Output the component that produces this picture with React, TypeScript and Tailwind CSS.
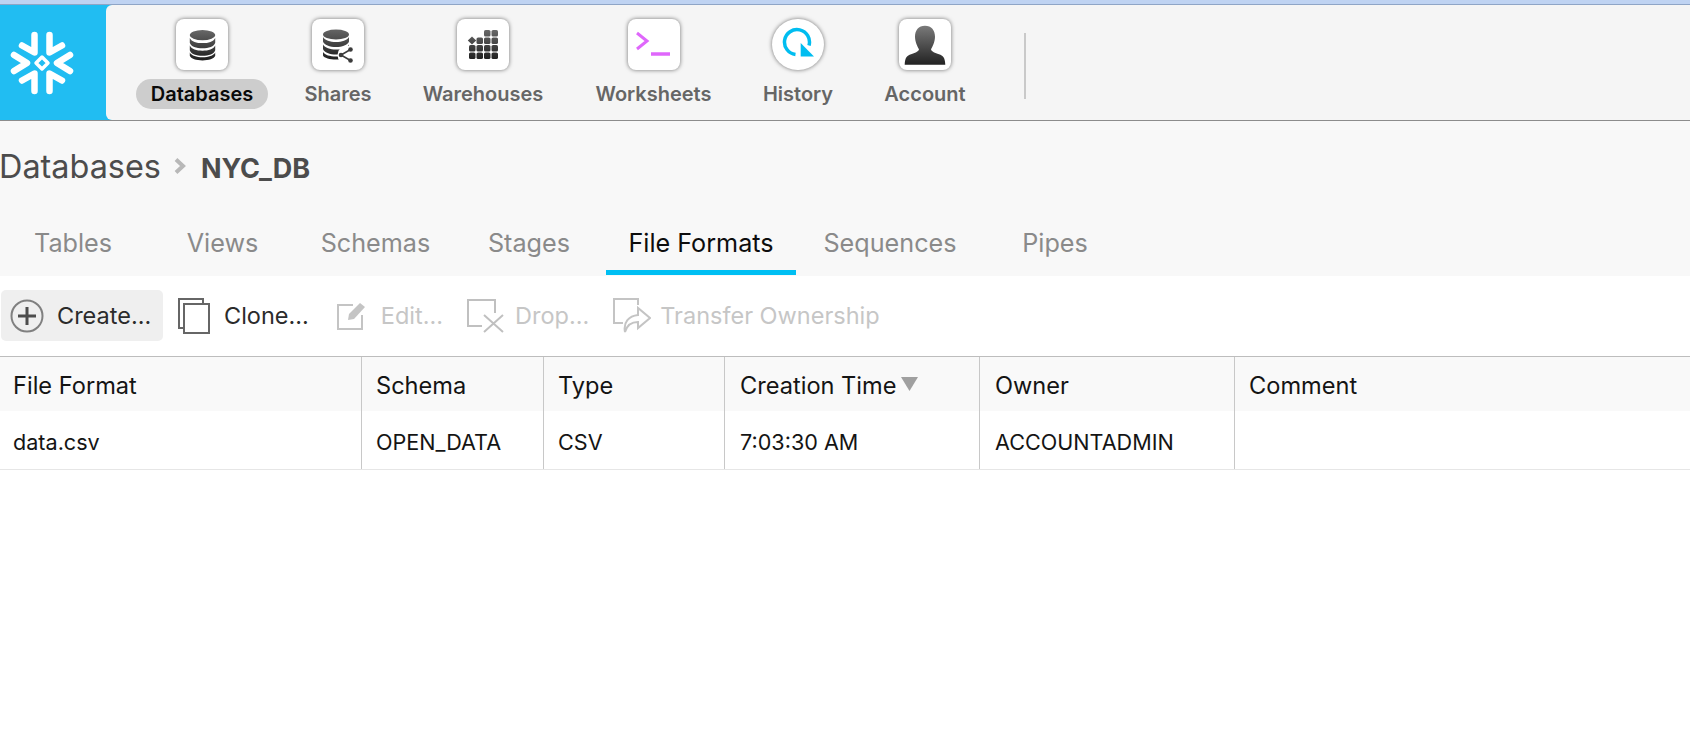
import React from "react";

const Tile = ({ round, children }: { round?: boolean; children: React.ReactNode }) => (
  <div className={`flex h-[51px] w-[52px] items-center justify-center bg-white shadow-[0_0_4px_rgba(0,0,0,0.55)] ${round ? "rounded-full" : "rounded-[8px]"}`}>
    {children}
  </div>
);

const Grad = ({ id, h }: { id: string; h: number }) => (
  <defs>
    <linearGradient id={id} gradientUnits="userSpaceOnUse" x1="0" y1="0" x2="0" y2={h}>
      <stop offset="0" stopColor="#6a6a6a" />
      <stop offset="1" stopColor="#1c1c1c" />
    </linearGradient>
  </defs>
);

const Disc = () => (
  <svg width="29" height="32" viewBox="0 0 30 34" fill="url(#discGrad)">
    <Grad id="discGrad" h={34} />
    <ellipse cx="15" cy="6.500" rx="13.500" ry="5.500" />
    <path d="M1.500 9.500c2 4 7 5.500 13.500 5.500s11.500-1.500 13.500-5.500v5c-1 4-7 6-13.500 6s-12.500-2-13.500-6z" />
    <path d="M1.500 17.500c2 4 7 5.500 13.500 5.500s11.500-1.500 13.500-5.500v5c-1 4-7 6-13.500 6s-12.500-2-13.500-6z" />
    <path d="M1.500 25c2 3.500 7 5 13.500 5s11.500-1.500 13.500-5v3.500c-1 3-7 5-13.500 5s-12.500-2-13.500-5z" />
  </svg>
);

const ShareDisc = () => (
  <svg width="34" height="36" viewBox="0 0 34 36" fill="url(#shareGrad)">
    <Grad id="shareGrad" h={34} />
    <ellipse cx="15" cy="7.500" rx="13" ry="5" />
    <path d="M2 10c2 3.500 7 5 13 5s11-1.500 13-5v4.500c-1 3.500-7 5.500-13 5.500s-12-2-13-5.500z" />
    <path d="M2 17.500c2 3.500 7 5 13 5s11-1.500 13-5v4.500c-1 3.500-7 5.500-13 5.500s-12-2-13-5.500z" />
    <path d="M2 25c2 3 7 4.500 13 4.500s11-1.500 13-4.500v3.500c-1 2.500-7 4-13 4s-12-1.500-13-4z" />
    <circle cx="26" cy="28" r="9.500" fill="#ffffff" />
    <path d="M29.500 22.500 L20 28 L29.500 33.500" fill="none" stroke="#3c3c3c" strokeWidth="1.600" />
    <circle cx="29.500" cy="22.500" r="2.300" fill="#3c3c3c" />
    <circle cx="20" cy="28" r="2.300" fill="#3c3c3c" />
    <circle cx="29.500" cy="33.500" r="2.300" fill="#3c3c3c" />
  </svg>
);

const Grid = () => {
  const cells: [number, number][] = [
    [2, 0], [3, 0],
    [1, 1], [2, 1], [3, 1],
    [0, 2], [1, 2], [2, 2], [3, 2],
    [0, 3], [1, 3], [2, 3], [3, 3],
  ];
  return (
    <svg width="34" height="32" viewBox="0 0 34 32" fill="url(#gridGrad)">
      <Grad id="gridGrad" h={32} />
      <path d="M6 7.500 L10.200 11.500 L6 15.500 L1.800 11.500 Z" />
      {cells.map(([c, r]) => (
        <rect key={`${c}-${r}`} x={3 + c * 7.500} y={1 + r * 7.500} width="6.500" height="6.500" rx="1.600" />
      ))}
    </svg>
  );
};

const Terminal = () => (
  <svg width="40" height="30" viewBox="0 0 40 30">
    <path d="M3 3 L13 11 L3 19" fill="none" stroke="#df67fb" strokeWidth="3" />
    <path d="M17 24 H36" stroke="#df67fb" strokeWidth="3.500" />
  </svg>
);

const HistoryIcon = () => (
  <svg width="36" height="36" viewBox="0 0 36 36">
    <path d="M15.500 27.500 A12.500 12.500 0 1 1 29 18.500" fill="none" stroke="#00bdf0" strokeWidth="3.500" />
    <path d="M20.700 16 V29.500 H34 Z" fill="#00bdf0" />
  </svg>
);

const Person = () => (
  <svg width="48" height="48" viewBox="0 0 48 48">
    <defs>
      <linearGradient id="person" x1="0" y1="0" x2="0" y2="1">
        <stop offset="0" stopColor="#7a7a7a" />
        <stop offset="1" stopColor="#222" />
      </linearGradient>
    </defs>
    <path d="M24 4.700c6.500 0 10 4.500 10 11 0 5-2.500 10-4 12.500 .7 2.500 4 3.700 8 5 4 1.300 6 3 6.300 10.500H3.700c.3-7.500 2.300-9.200 6.300-10.500 4-1.300 7.300-2.500 8-5-1.500-2.500-4-7.500-4-12.500 0-6.500 3.500-11 10-11z" fill="url(#person)" />
  </svg>
);

const Flake = () => (
  <svg width="80" height="80" viewBox="0 0 80 80" fill="none" stroke="#fff" strokeWidth="6.500" strokeLinecap="round" strokeLinejoin="round">
    <path d="M32.500 12 V29.500 L20 22.500" />
    <path d="M47.500 12 V29.500 L60 22.500" />
    <path d="M12 32 L25 40 L12 48" />
    <path d="M68 32 L55 40 L68 48" />
    <path d="M32.500 68 V50.500 L20 57.500" />
    <path d="M47.500 68 V50.500 L60 57.500" />
    <path d="M40 34 L46 40 L40 46 L34 40 Z" strokeWidth="3.500" />
  </svg>
);

const NavItem = ({ w, label, active, icon, round }: { w: string; label: string; active?: boolean; icon: React.ReactNode; round?: boolean }) => (
  <div className={`flex flex-col items-center ${w}`}>
    <Tile round={round}>{icon}</Tile>
    <div className={`mt-[9px] flex h-[30px] items-center rounded-full px-[15px] text-[20px] font-semibold ${active ? "bg-[#cdcdcd] text-[#0a0a0a]" : "text-[#666666]"}`}>
      {label}
    </div>
  </div>
);

const PlusIcon = () => (
  <svg width="34" height="34" viewBox="0 0 34 34" fill="none">
    <circle cx="17" cy="17" r="15.500" stroke="#808080" strokeWidth="2" />
    <path d="M8 17 H26 M17 8 V26" stroke="#4d4d4d" strokeWidth="3" />
  </svg>
);

const CloneIcon = () => (
  <svg width="32" height="36" viewBox="0 0 32 36" fill="none" stroke="#666666" strokeWidth="2">
    <path d="M6 30 H1 V1 H25 V6" />
    <rect x="6" y="6" width="25" height="29" fill="#fff" />
  </svg>
);

const EditIcon = () => (
  <svg width="29" height="28" viewBox="0 0 29 28" fill="none">
    <path d="M16 3 H1 V27 H25 V13" stroke="#c4c4c4" strokeWidth="2" />
    <path d="M11 18 L12 12 L23 1 L28 5 L17 17 Z" fill="#c4c4c4" />
  </svg>
);

const DropIcon = () => (
  <svg width="37" height="34" viewBox="0 0 37 34" fill="none" stroke="#c0c0c0" strokeWidth="2">
    <path d="M15 27 H1 V1 H28 V14" />
    <path d="M17 16 L36 33 M36 16 L17 33" />
  </svg>
);

const TransferIcon = () => (
  <svg width="38" height="36" viewBox="0 0 38 36" fill="none" stroke="#c4c4c4" strokeWidth="2">
    <path d="M10 25 H1 V1 H25 V7" />
    <path d="M12 34 C10 24 16 18 25 17 V10 L37 20 L25 30 V24 C19 24 14 27 12 34 Z" />
  </svg>
);

const Tool = ({ label, icon, dim, hover, cls }: { label: string; icon: React.ReactNode; dim?: boolean; hover?: boolean; cls: string }) => (
  <div className={`flex h-[51px] items-center rounded-[5px] ${hover ? "bg-[#efefef]" : ""} ${cls}`}>
    {icon}
    <span className={`whitespace-nowrap text-[23.5px] ${dim ? "text-[#c6c6c6]" : "text-[#2b2b2b]"}`}>{label}</span>
  </div>
);

const columns = [
  { w: "w-[362px]", pad: "pl-[13px]", head: "File Format", cell: "data.csv" },
  { w: "w-[182px]", pad: "pl-[14px]", head: "Schema", cell: "OPEN_DATA" },
  { w: "w-[181px]", pad: "pl-[14px]", head: "Type", cell: "CSV" },
  { w: "w-[255px]", pad: "pl-[15px]", head: "Creation Time", cell: "7:03:30 AM", sort: true },
  { w: "w-[255px]", pad: "pl-[15px]", head: "Owner", cell: "ACCOUNTADMIN" },
  { w: "flex-1", pad: "pl-[14px]", head: "Comment", cell: "" },
];

const tabs = [
  { w: "w-[146px]", t: "Tables" },
  { w: "w-[153px]", t: "Views" },
  { w: "w-[153px]", t: "Schemas" },
  { w: "w-[154px]", t: "Stages" },
  { w: "w-[190px]", t: "File Formats", active: true },
  { w: "w-[188px]", t: "Sequences" },
  { w: "w-[142px]", t: "Pipes" },
];

export default function App() {
  return (
    <div className="h-[746px] w-[1690px] overflow-hidden bg-white font-['Inter',sans-serif]">
      <div className="h-[4px] bg-[#bfd3f2]" />
      <div className="h-[1px] bg-[#8fa5c6]" />
      <header className="flex h-[116px] border-b border-[#8c8c8c] bg-[#21bdf2]">
        <div className="flex w-[106px] shrink-0 items-center pl-[2px]">
          <Flake />
        </div>
        <div className="flex flex-1 items-start rounded-tl-[6px] rounded-bl-[6px] bg-[#f5f5f5] pl-[29px] pt-[14px]">
          <NavItem w="w-[134px]" label="Databases" active icon={<Disc />} />
          <NavItem w="w-[138px]" label="Shares" icon={<ShareDisc />} />
          <NavItem w="w-[152px]" label="Warehouses" icon={<Grid />} />
          <NavItem w="w-[189px]" label="Worksheets" icon={<Terminal />} />
          <NavItem w="w-[100px]" label="History" round icon={<HistoryIcon />} />
          <NavItem w="w-[154px]" label="Account" icon={<Person />} />
          <div className="ml-[22px] mt-[14px] h-[66px] w-[2px] bg-[#c9c9c9]" />
        </div>
      </header>

      <div className="bg-[#f8f8f8]">
        <div className="flex h-[92px] items-center pt-[2px] text-[#4c4c4c]">
          <span className="-ml-[1px] mb-[2px] text-[32.4px] leading-none">Databases</span>
          <svg className="mb-[4px] ml-[12px]" width="13" height="16" viewBox="0 0 13 16">
            <path d="M3 1.500 L10 8 L3 14.500" fill="none" stroke="#b8b8b8" strokeWidth="4" />
          </svg>
          <span className="ml-[15px] text-[27px] font-bold leading-none">NYC_DB</span>
        </div>
        <div className="flex h-[63px] items-stretch">
          {tabs.map((t) =>
            t.active ? (
              <div key={t.t} className={`${t.w} mb-[1px] flex items-center justify-center border-b-[5px] border-[#00bff3] pt-[5px] text-[25.2px] text-[#0d0d0d]`}>
                {t.t}
              </div>
            ) : (
              <div key={t.t} className={`${t.w} flex items-center justify-center pb-[5px] pt-[3px] text-[25.2px] text-[#8a8a8a]`}>
                {t.t}
              </div>
            )
          )}
        </div>
      </div>

      <div className="flex h-[80px] items-start pt-[14px]">
        <Tool cls="ml-[1px] w-[162px] pl-[9px] gap-[13px]" hover label="Create..." icon={<PlusIcon />} />
        <Tool cls="ml-[15px] gap-[14px]" label="Clone..." icon={<CloneIcon />} />
        <Tool cls="ml-[28px] gap-[15px]" dim label="Edit..." icon={<EditIcon />} />
        <Tool cls="ml-[24px] gap-[11px]" dim label="Drop..." icon={<DropIcon />} />
        <Tool cls="ml-[24px] gap-[9px]" dim label="Transfer Ownership" icon={<TransferIcon />} />
      </div>

      <div className="border-t border-[#bdbdbd]">
        <div className="flex h-[54px] bg-[#f9f9f9]">
          {columns.map((c, i) => (
            <div key={c.head} className={`${c.w} ${c.pad} flex items-center pt-[3px] text-[23.6px] text-[#141414] ${i < 5 ? "border-r border-[#c8c8c8]" : ""}`}>
              {c.head}
              {c.sort && (
                <svg className="mb-[3px] ml-[5px]" width="17" height="14" viewBox="0 0 17 14">
                  <path d="M0 0 H17 L8.500 14 Z" fill="#a0a0a0" />
                </svg>
              )}
            </div>
          ))}
        </div>
        <div className="flex h-[59px] border-b border-[#e6e6e6]">
          {columns.map((c, i) => (
            <div key={c.head} className={`${c.w} ${c.pad} flex items-center pt-[4px] text-[21.6px] text-[#141414] ${i < 5 ? "border-r border-[#c8c8c8]" : ""}`}>
              {c.cell}
            </div>
          ))}
        </div>
      </div>
    </div>
  );
}
